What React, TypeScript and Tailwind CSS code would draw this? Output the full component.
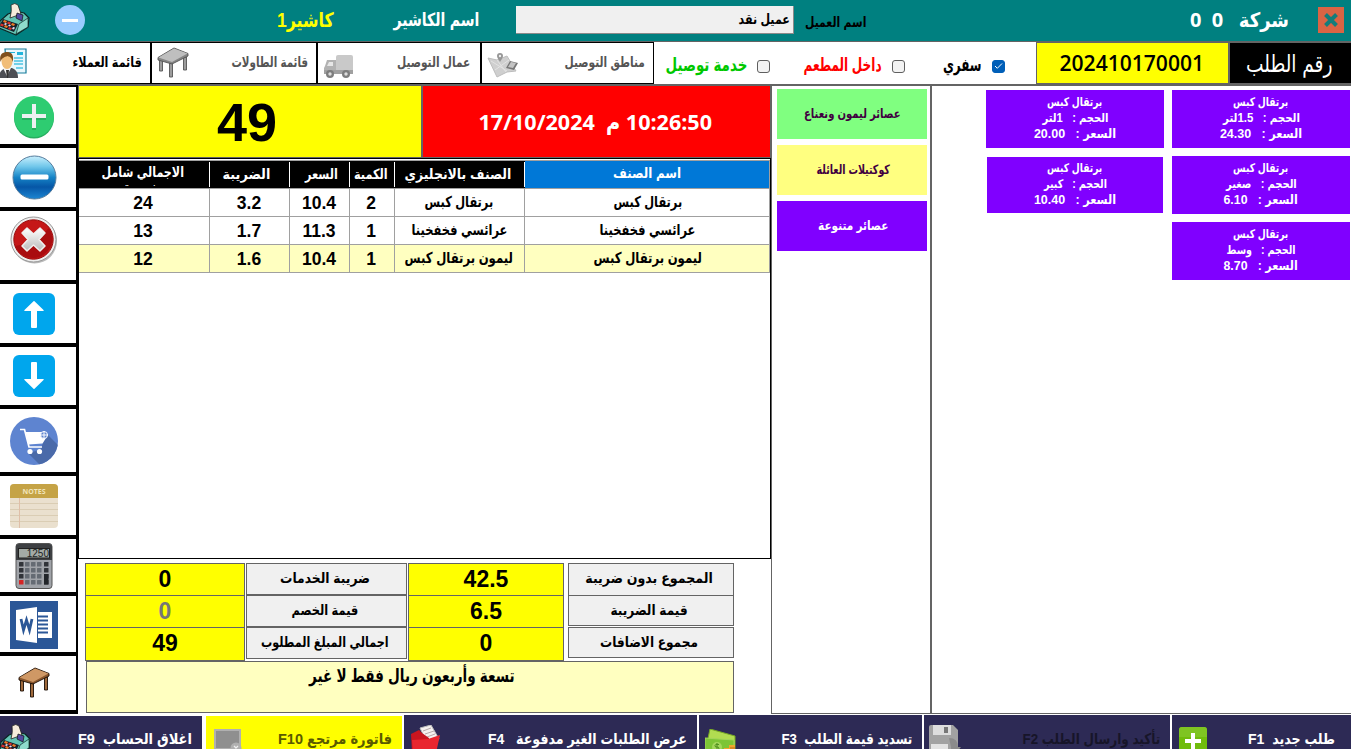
import React, { useLayoutEffect, useRef, useState } from "react";

function Fit({ w, className = "", children }: { w: number; className?: string; children: React.ReactNode }) {
  const ref = useRef<HTMLSpanElement>(null);
  const [scale, setScale] = useState(1);
  useLayoutEffect(() => {
    if (ref.current) setScale(w / ref.current.offsetWidth);
  }, [w]);
  return (
    <span dir="ltr" className={`inline-flex shrink-0 justify-center ${className}`} style={{ width: w }}>
      <span ref={ref} dir="rtl" className="inline-block shrink-0 whitespace-pre" style={{ transform: `scaleX(${scale})` }}>
        {children}
      </span>
    </span>
  );
}

function Register({ className = "" }: { className?: string }) {
  return (
    <svg className={className} width="31" height="33" viewBox="0 0 31 33" strokeLinejoin="round">
      <path d="M1 18L9 11L17 8L25 10L30 15L29 24L17 32L0 25Z" fill="#63c4b4" stroke="#0b2524" strokeWidth="1.2" />
      <path d="M17 31L20 21L29 15L29 24Z" fill="#8fdccb" stroke="#0b2524" strokeWidth=".7" />
      <path d="M12 2Q16 -1 19 2L22 11L11 15Q13 8 12 2Z" fill="#f6ecdb" stroke="#222" strokeWidth=".8" />
      <path d="M18 10L24 12L23 18L17 15Z" fill="#5349a0" stroke="#111" strokeWidth=".7" />
      <path d="M4 16L19 21L15 29L0 23Z" fill="#16202a" />
      <path d="M5 17l3 1-1 2-3-1zM13 20l3 1-1 2-3-1zM6 22l3 1-1 2-3-1z" fill="#f27a25" />
      <path d="M9 18.500l3 1-1 2-3-1zM2 20.500l3 1-1 2-3-1zM10 24l3 1-1 2-3-1z" fill="#d8322c" />
      <path d="M6 20l2 .5-1 1.500-2-.5zM10 21.500l2 .5-1 1.500-2-.5zM14 24l2 .5-1 2-2-.5z" fill="#e8d9ef" />
    </svg>
  );
}

function Customer() {
  return (
    <svg width="28" height="31" viewBox="0 0 28 31">
      <path d="M6 1H27V25H8Z" fill="#e8f7fc" stroke="#167c9b" strokeWidth="1.2" />
      <path d="M18 4h6v3h-6zM10 4h6v1h-6z" fill="#22b5dc" />
      <path d="M15 10h9M15 13h9M15 16h9M17 20h7" stroke="#49c3e2" strokeWidth="1.4" />
      <path d="M0 30 C0 24 3 21 7 20 L13 20 C17 22 19 24 19 30Z" fill="#4d4f55" />
      <path d="M4 20L8 28L12 20Z" fill="#f3f3f3" />
      <path d="M7 22h3l-1 8h-1z" fill="#333" />
      <ellipse cx="8" cy="13" rx="5.500" ry="8" fill="#f1bd78" />
      <path d="M1.500 14C0 7 3 4 8 4c6 0 7 5 5.500 10-.5-4-2-5-5-6-3 1-6 2-7 6z" fill="#80501d" />
    </svg>
  );
}

function Table({ wood = false }: { wood?: boolean }) {
  const edge = wood ? "#1b0f06" : "#555";
  return (
    <svg width="32" height="32" viewBox="0 0 32 32" strokeLinejoin="round">
      <g fill={wood ? "#a06a3c" : "#9c9c9c"} stroke={edge} strokeWidth=".9">
        <path d="M2.500 12h3v12h-3zM12.500 16h3v14h-3zM26.500 10h3v13h-3z" />
      </g>
      <path d="M1 10.500L17 1L31 6.500V9L15 17L1 13Z" fill={wood ? "#8a562c" : "#858585"} stroke={edge} strokeWidth=".9" />
      <path d="M1.500 10.500L17 1.500L30.500 6.500L15 15Z" fill={wood ? "#cf9865" : "#bfbfbf"} />
    </svg>
  );
}

function Truck() {
  return (
    <svg width="30" height="25" viewBox="0 0 30 25">
      <rect x="12" y="1" width="17" height="17" rx="2" fill="#c9c9c9" />
      <path d="M1 12L3 6H12V20H0V14Z" fill="#b2b2b2" />
      <path d="M3 12L5 8H9V12Z" fill="#e6e6e6" />
      <path d="M0 16H29V20H0Z" fill="#a0a0a0" />
      <circle cx="6" cy="20" r="4" fill="#7d7d7d" />
      <circle cx="6" cy="20" r="1.700" fill="#ddd" />
      <circle cx="22" cy="20" r="4" fill="#7d7d7d" />
      <circle cx="22" cy="20" r="1.700" fill="#ddd" />
    </svg>
  );
}

function MapIcon() {
  return (
    <svg width="32" height="26" viewBox="0 0 32 26">
      <path d="M1 6L10 8L20 4L29 19L20 20L10 25Z" fill="#cfcfcf" stroke="#bdbdbd" />
      <path d="M4 9L20 19M8 18L22 8M10 8L19 20" stroke="#e3e3e3" fill="none" />
      <path d="M10 4a3 3 0 1 1 6 0c0 2-2 4-3 6-1-2-3-4-3-6z" fill="#969696" />
      <circle cx="13" cy="4" r="1.200" fill="#eee" />
      <path d="M23 9L31 11L27 18L19 16Z" fill="#777" />
      <path d="M24 10L29 11L26 16L21 15Z" fill="#c4c4c4" />
    </svg>
  );
}

const Plus = () => (
  <svg width="40" height="43" viewBox="0 0 40 43">
    <ellipse cx="20" cy="22" rx="20" ry="20.500" fill="#27ae60" />
    <ellipse cx="20" cy="20.500" rx="20" ry="20.500" fill="#2ecc71" />
    <path d="M18 10h4v10h10v4H22v10h-4V24H8v-4h10z" fill="#27ae60" />
    <path d="M18 8h4v10h10v4H22v10h-4V22H8v-4h10z" fill="#ecf0f1" />
  </svg>
);

const Minus = () => (
  <svg width="45" height="45" viewBox="0 0 45 45">
    <defs>
      <linearGradient id="minus" x2="0" y2="1">
        <stop stopColor="#c9effd" />
        <stop offset=".25" stopColor="#6fc6ea" />
        <stop offset=".5" stopColor="#1583c6" />
        <stop offset=".72" stopColor="#0656a6" />
        <stop offset="1" stopColor="#1c86d2" />
      </linearGradient>
    </defs>
    <circle cx="22.500" cy="22.500" r="21.500" fill="url(#minus)" stroke="#547c9d" />
    <rect x="8.500" y="19.500" width="28" height="5" rx="1.500" fill="#fff" />
  </svg>
);

const Cancel = () => (
  <svg width="48" height="48" viewBox="0 0 48 48">
    <defs>
      <linearGradient id="cross" x2="0" y2="1">
        <stop stopColor="#fff" />
        <stop offset="1" stopColor="#bababa" />
      </linearGradient>
    </defs>
    <circle cx="24.500" cy="25" r="22.500" fill="#bbb" />
    <circle cx="23.500" cy="23.500" r="22.500" fill="#eee" stroke="#999" />
    <circle cx="23.500" cy="23.500" r="19.700" fill="#c51718" stroke="#991010" />
    <path d="M5 30C15 29 31 21 39 12C49 29 34 42 24 42C15 42 8 38 5 30Z" fill="#a90c0f" />
    <path d="M17 12L23.500 18L30 12L35 17L29 23.500L35 30L30 35L23.500 29L17 35L12 30L18 23.500L12 17Z" fill="url(#cross)" stroke="#f0f0f0" strokeLinejoin="round" strokeWidth="1.500" />
  </svg>
);

const Arrow = ({ down = false }: { down?: boolean }) => (
  <svg width="42" height="42" viewBox="0 0 42 42">
    <rect width="42" height="42" rx="6" fill="#00a6ed" />
    <path
      transform={down ? "rotate(180 21 21)" : undefined}
      d="M20.500 8.300Q21 7.700 21.500 8.300L30.500 17Q31.500 18 30 18H24V34Q24 35 23 35H19Q18 35 18 34V18H12Q10.500 18 11.500 17Z"
      fill="#fff"
    />
  </svg>
);

const Cart = () => (
  <svg width="48" height="48" viewBox="0 0 48 48">
    <defs>
      <clipPath id="disc">
        <circle cx="24" cy="24" r="24" />
      </clipPath>
    </defs>
    <circle cx="24" cy="24" r="24" fill="#5e84d0" />
    <path d="M37 17L50 30V50H32L18 36L30 33Z" fill="#4a6aa9" clipPath="url(#disc)" />
    <path d="M10 12.500h4.500L19 30h13" fill="none" stroke="#fff" strokeWidth="1.700" />
    <path d="M15.500 15H33V21H36L32.500 26.500L18.500 27.500Z" fill="#fff" />
    <circle cx="34" cy="18" r="3.500" fill="#5e84d0" stroke="#fff" />
    <path d="M34 14v8M30 18h8" stroke="#fff" />
    <circle cx="20" cy="34.500" r="2.600" fill="#fff" />
    <circle cx="29.500" cy="34.500" r="2.600" fill="#fff" />
  </svg>
);

const Notes = () => (
  <svg width="48" height="44" viewBox="0 0 48 44">
    <rect width="48" height="44" rx="4" fill="#eae0ce" />
    <path d="M0 14V4Q0 0 4 0H44Q48 0 48 4V14Z" fill="#c5a346" />
    <path d="M0 19.500H48M0 25.500H48M0 31.500H48M0 37.500H48" stroke="#dacdb4" />
    <path d="M9.500 14V44" stroke="#dfbfa8" />
    <text x="24" y="10" textAnchor="middle" fontFamily="Open Sans, sans-serif" fontWeight="700" fontSize="7" fill="#f1e5bb">NOTES</text>
  </svg>
);

const Calculator = () => (
  <svg width="38" height="46" viewBox="0 0 38 46">
    <rect x="1" y="0.500" width="36" height="45" rx="3" fill="#a0a3a8" stroke="#555" />
    <path d="M1 3Q1 1 4 1H34Q37 1 37 4V17H1Z" fill="#3e4043" />
    <rect x="3.500" y="5.500" width="31" height="9.500" fill="#a3aaa5" stroke="#222" />
    <text x="34" y="14" textAnchor="end" fontFamily="Liberation Sans, sans-serif" fontSize="10" fontWeight="400" fill="#202424">1250</text>
    <g>
      {[19, 25, 31, 37].map((y) => [4, 10, 16, 22, 29].map((x) => <rect key={`${x}-${y}`} x={x} y={y} width="4.500" height="4.500" rx=".5" fill={x === 4 && y === 37 ? "#d52424" : x === 29 || x === 4 ? "#303338" : "#656b73"} />))}
    </g>
    <rect x="29" y="31" width="4.500" height="10.500" fill="#222529" />
  </svg>
);

const Word = () => (
  <svg width="48" height="48" viewBox="0 0 48 48">
    <path d="M0 0H48V48H0Z" fill="#2b5797" />
    <path d="M28 11H42V37H28Z" fill="#fff" />
    <path d="M28 15.500h10M28 19.500h10M28 23.500h10M28 27.500h10M28 31.500h10" stroke="#2b5797" strokeWidth="1.800" />
    <path d="M6 9L27 6V42L6 39Z" fill="#fff" />
    <path d="M11 18L13.500 29L16.500 19L19.500 29L22 18" fill="none" stroke="#2b5797" strokeWidth="2.800" />
  </svg>
);

const FolderIcon = () => (
  <svg width="30" height="28" viewBox="0 0 30 28">
    <path d="M9 3L20 0L28 14L19 24Z" fill="#f6f1ef" stroke="#bbb" />
    <path d="M12 6L20 3M14 9L23 6M16 12L24 9" stroke="#b5a9a9" />
    <path d="M0 9L8 5L11 8L18 13V28H1Z" fill="#c9151f" />
    <path d="M1 15L17 14L29 10L25 28H2Z" fill="#e9262f" />
  </svg>
);

const Money = () => (
  <svg width="32" height="28" viewBox="0 0 32 28">
    <path d="M5 0L30 7V20L2 14Z" fill="#b1dc51" stroke="#75a824" />
    <path d="M0 9L29 11V28H0Z" fill="#7cc535" stroke="#a4d55a" />
    <circle cx="12" cy="18" r="5" fill="#a3d75b" />
    <path d="M14 15.500q-4-1-4 1t2 1.500 2 2-4 1M12 14v9" fill="none" stroke="#4d8e1d" />
    <path d="M19 19h5v-3h6v12H17v-6h2z" fill="#f0a72c" />
    <path d="M18 23h6M18 26h6M25 19h5M25 23h5" stroke="#b96f1d" />
  </svg>
);

const Save = () => (
  <svg width="32" height="28" viewBox="0 0 32 28">
    <path d="M0 2Q0 0 2 0H24L29 5V28H0Z" fill="#a2a2a2" />
    <path d="M4 0H22V10H4Z" fill="#ddd" />
    <path d="M15 2h4v6h-4z" fill="#777" />
    <path d="M2 19H19V28H2Z" fill="#e2e2e2" />
    <path d="M20 13Q29 13 29 22H32L27 28H22V22Z" fill="#8b8b8b" />
  </svg>
);

const NewOrder = () => (
  <svg width="28" height="28" viewBox="0 0 28 28">
    <rect width="28" height="32" rx="3" fill="#70bc0c" />
    <path d="M0 3Q0 0 3 0H25Q28 0 28 3V10H0Z" fill="#7fc422" />
    <path d="M12 6h4v6h6v4h-6v7h-4v-7H6v-4h6z" fill="#fff" />
  </svg>
);

const ReturnIcon = () => (
  <svg width="30" height="24" viewBox="0 0 30 24">
    <path d="M0 0H27V22H0Z" fill="#b0b0b0" />
    <path d="M2 2H25V19H2Z" fill="#8f8f8f" />
    <circle cx="22" cy="19" r="5.500" fill="#b0b0b0" />
    <path d="M20 17l4 4M24 17l-4 4" stroke="#eee" strokeWidth="1.300" />
  </svg>
);

function Check({ on = false }: { on?: boolean }) {
  return (
    <span className={`flex size-[13px] shrink-0 items-center justify-center rounded-[3px] border ${on ? "border-[#005fb8] bg-[#005fb8]" : "border-[#5f5f5f] bg-[#f3f3f3]"}`}>
      {on && (
        <svg width="9" height="8" viewBox="0 0 9 8">
          <path d="M1 4L3.300 6.300L8 1.500" fill="none" stroke="#fff" />
        </svg>
      )}
    </span>
  );
}

const cols = "grid grid-cols-[131px_80px_60px_45px_130px_245px]";
const rows = [
  { total: "24", tax: "3.2", price: "10.4", qty: "2", name: "برتقال كبس", w: 69 },
  { total: "13", tax: "1.7", price: "11.3", qty: "1", name: "عرائسي فخفخينا", w: 96 },
  { total: "12", tax: "1.6", price: "10.4", qty: "1", name: "ليمون برتقال كبس", w: 108 },
];

const heads = [
  { t: "الضريبة", w: 48, pad: "pr-[6px]" },
  { t: "السعر", w: 33, pad: "pl-[3px]" },
  { t: "الكمية", w: 34, pad: "pr-[2px]" },
  { t: "الصنف بالانجليزي", w: 107, pad: "pr-[3px]" },
];

function Product({ size, sw, price, small = false }: { size: string; sw: number; price: string; small?: boolean }) {
  return (
    <div className={`flex flex-col items-center bg-[#8000ff] text-[12px] leading-[16px] text-white ${small ? "mx-px my-px h-14 pt-[3px]" : "h-[58px] pt-[4px]"}`}>
      <Fit w={55}>برتقال كبس</Fit>
      <Fit w={sw}>{`الحجم :   ${size}`}</Fit>
      <Fit w={price.length > 4 ? 82 : 74} className="text-[12.500px]">{`السعر :   ${price}`}</Fit>
    </div>
  );
}

function SumLabel({ w, children, className }: { w: number; children: string; className: string }) {
  return (
    <div className={`flex justify-center border border-[#646464] bg-[#f0f0f0] pr-[4px] text-[14px] leading-[29px] ${className}`}>
      <Fit w={w}>{children}</Fit>
    </div>
  );
}

function SideCell({ className, children }: { className: string; children: React.ReactNode }) {
  return <div className={`flex shrink-0 justify-center border-b-4 border-black pr-[8px] ${className}`}>{children}</div>;
}

export default function App() {
  return (
    <div className="flex h-[749px] w-[1351px] flex-col overflow-hidden bg-white font-['Liberation_Sans','DejaVu_Sans_Condensed','DejaVu_Sans',sans-serif] font-bold text-black">
      <header className="flex h-[42px] shrink-0 border-b border-[#646464] bg-[#008080]">
        <Register className="mt-[3px] -ml-px shrink-0" />
        <span className="mt-[5px] ml-[25px] flex size-[30px] shrink-0 items-center justify-center rounded-full bg-[#99ccff]">
          <span className="h-[3px] w-4 bg-white" />
        </span>
        <Fit w={57} className="ml-[192px] text-[20px] leading-[41px] text-[#ffff00]">كاشير1</Fit>
        <Fit w={86} className="ml-[59px] text-[18px] leading-[40px] text-white">اسم الكاشير</Fit>
        <div className="mt-[6px] ml-[37px] flex h-7 w-[278px] shrink-0 justify-end border-r border-b border-[#8a8a8a] bg-[#f0f0f0] pr-[3px] text-[14px] leading-[26px]">
          <Fit w={51}>عميل نقد</Fit>
        </div>
        <Fit w={61} className="ml-[11px] text-[14px] leading-[45px]">اسم العميل</Fit>
        <Fit w={99} className="ml-[324px] font-['Open_Sans','DejaVu_Sans_Condensed',sans-serif] text-[20px] leading-[40px] text-white">{"شركة   0  0"}</Fit>
        <span className="mt-[7px] ml-[29px] flex size-[26px] items-center justify-center bg-[#da6444]">
          <svg width="14" height="14" viewBox="0 0 14 14">
            <path d="M1.500 1.500L12.500 12.500M12.500 1.500L1.500 12.500" stroke="#127d7b" strokeWidth="4" />
          </svg>
        </span>
      </header>

      <nav className="flex h-11 shrink-0 border-b-2 border-[#646464] text-[14px] leading-[38px]">
        <div className="flex h-[42px] w-[654px] shrink-0 border-y border-black text-[#555]">
          <div className="flex w-[152px] items-start justify-between border-r-2 border-black pr-[8px] text-black">
            <span className="-ml-px pt-[5px]"><Customer /></span>
            <Fit w={69}>قائمة العملاء</Fit>
          </div>
          <div className="flex w-[166px] items-start justify-between border-r-2 border-black pr-[8px] pl-[5px]">
            <span className="pt-[4px]"><Table /></span>
            <Fit w={77}>قائمة الطاولات</Fit>
          </div>
          <div className="flex w-[164px] items-start justify-between border-r-2 border-black pr-[10px] pl-[6px]">
            <span className="pt-[11px]"><Truck /></span>
            <Fit w={73}>عمال التوصيل</Fit>
          </div>
          <div className="flex w-[172px] items-start justify-between border-r border-black pr-[8px] pl-[5px]">
            <span className="pt-[9px]"><MapIcon /></span>
            <Fit w={80}>مناطق التوصيل</Fit>
          </div>
        </div>
        <div className="flex w-[382px] shrink-0 items-center pl-[11px] text-[18px] leading-[40px]">
          <Fit w={82} className="mt-[3px] text-[#00c800]">خدمة توصيل</Fit>
          <span className="mt-[6px] ml-[10px]"><Check /></span>
          <Fit w={78} className="mt-[3px] ml-[34px] text-[#ff0000]">داخل المطعم</Fit>
          <span className="mt-[6px] ml-[10px]"><Check /></span>
          <Fit w={39} className="mt-[3px] ml-[38px]">سفري</Fit>
          <span className="mt-[6px] ml-[10px]"><Check on /></span>
        </div>
        <div className="flex h-[42px] w-[192px] shrink-0 items-center justify-center border border-r-0 border-[#646464] bg-[#ffff00] pr-[2px] font-['Open_Sans',sans-serif] text-[21.500px] font-semibold">
          <Fit w={145}>202410170001</Fit>
        </div>
        <div className="flex h-[42px] flex-1 justify-end border-y border-l-2 border-[#646464] bg-black pr-[19px] text-[24px] leading-[42px] font-normal text-white">
          <Fit w={86}>رقم الطلب</Fit>
        </div>
      </nav>

      <main className="flex h-[628px] shrink-0">
        <aside className="-mt-px flex h-[629px] w-[78px] shrink-0 flex-col border-t-2 border-r-2 border-black">
          <SideCell className="h-[61px] pt-[9px]"><Plus /></SideCell>
          <SideCell className="h-[63px] pt-[7px]"><Minus /></SideCell>
          <SideCell className="h-[73px] pt-[5px]"><Cancel /></SideCell>
          <SideCell className="h-[63px] pt-[9px]"><Arrow /></SideCell>
          <SideCell className="h-[62px] pt-[8px]"><Arrow down /></SideCell>
          <SideCell className="h-[67px] pt-[8px]"><Cart /></SideCell>
          <SideCell className="h-[63px] pt-[8px]"><Notes /></SideCell>
          <SideCell className="h-[57px] pt-[4px]"><Calculator /></SideCell>
          <SideCell className="h-[60px] pt-[5px]"><Word /></SideCell>
          <SideCell className="h-[58px] border-b-2 pt-[11px]"><Table wood /></SideCell>
        </aside>

        <section className="flex w-[693px] shrink-0 flex-col">
          <div className="flex h-[72px] border-b border-l border-[#646464]">
            <div className="flex w-[342px] items-center justify-center bg-[#ffff00] pr-[6px] text-[54px] leading-none">
              <span>49</span>
            </div>
            <div className="flex flex-1 items-center justify-center border-x-2 border-r border-[#646464] bg-[#ff0000] pr-[3px] font-['Open_Sans','DejaVu_Sans_Condensed',sans-serif] text-[22px] leading-[68px] text-white">
              <Fit w={234} className="-mt-[2px]">{"10:26:50 م  17/10/2024"}</Fit>
            </div>
          </div>
          <div className="flex h-[401px] flex-col border border-black">
            <div className="mt-px h-px w-[691px] bg-[#a0a0a0]" />
            <div className={`${cols} h-[28px] w-[691px] border-b border-[#a0a0a0] bg-black text-[14px] leading-[24px] text-white`}>
              <div className="my-px flex h-[25px] justify-center overflow-hidden border-r border-white pr-[2px] leading-[20px]">
                <span className="flex flex-col items-center">
                  <Fit w={82}>الاجمالي شامل</Fit>
                  <Fit w={40} className="-mt-[5px]">ضريبة</Fit>
                </span>
              </div>
              {heads.map((h) => (
                <div key={h.t} className={`my-px flex justify-center border-r border-white ${h.pad}`}>
                  <Fit w={h.w}>{h.t}</Fit>
                </div>
              ))}
              <div className="flex justify-center border-r border-[#a0a0a0] bg-[#0078d7]">
                <Fit w={68}>اسم الصنف</Fit>
              </div>
            </div>
            {rows.map((r, i) => (
              <div key={r.name} className={`${cols} h-[28px] w-[691px] border-b border-[#a0a0a0] text-[17.500px] leading-[28px] ${i === 2 ? "bg-[#ffffc0]" : "bg-white"}`}>
                {[r.total, r.tax, r.price, r.qty].map((v, j) => (
                  <div key={j} className={`border-r border-[#a0a0a0] text-center ${j === 0 || j === 3 ? "pr-[2px]" : "pr-[1px]"}`}>{v}</div>
                ))}
                <div className="flex justify-center border-r border-[#a0a0a0] pr-px text-[15px] leading-[26px]">
                  <Fit w={r.w}>{r.name}</Fit>
                </div>
                <div className="flex justify-center border-r border-[#a0a0a0] pl-px text-[15px] leading-[26px]">
                  <Fit w={r.w}>{r.name}</Fit>
                </div>
              </div>
            ))}
          </div>
          <div className="mt-[4px] ml-[7px] flex h-[98px] items-start">
            <div className="grid h-[98px] w-[160px] grid-rows-[32px_32px_34px] border-x border-[#646464] bg-[#ffff00] text-center text-[23px] leading-[31px]">
              <div className="border-t border-[#646464]">0</div>
              <div className="border-t border-[#646464] text-[#777]">0</div>
              <div className="border-y border-[#646464]">49</div>
            </div>
            <div className="ml-px w-[161px]">
              <SumLabel w={90} className="h-[32px]">ضريبة الخدمات</SumLabel>
              <SumLabel w={67} className="h-[32px]">قيمة الخصم</SumLabel>
              <SumLabel w={128} className="h-[32px]">اجمالي المبلغ المطلوب</SumLabel>
            </div>
            <div className="ml-px grid h-[98px] w-[156px] grid-rows-[32px_32px_34px] border-x border-[#646464] bg-[#ffff00] text-center text-[23px] leading-[31px]">
              <div className="border-t border-[#646464]">42.5</div>
              <div className="border-t border-[#646464]">6.5</div>
              <div className="border-y border-[#646464]">0</div>
            </div>
            <div className="ml-[4px] w-[166px]">
              <SumLabel w={127} className="h-[33px]">المجموع بدون ضريبة</SumLabel>
              <SumLabel w={77} className="-mt-px h-[31px]">قيمة الضريبة</SumLabel>
              <SumLabel w={98} className="mt-px h-[31px]">مجموع الاضافات</SumLabel>
            </div>
          </div>
          <div className="ml-[8px] flex h-[52px] w-[648px] justify-center border border-[#646464] bg-[#ffffc0] text-[18px] leading-[29px]">
            <Fit w={206} className="ml-[3px]">تسعة وأربعون ريال فقط لا غير</Fit>
          </div>
        </section>

        <section className="flex w-[161px] shrink-0 flex-col gap-[6px] border-r-2 border-b border-l border-[#646464] pt-[3px] pl-[5px] text-[13px] leading-[49px]">
          <div className="flex h-[50px] w-[150px] justify-center bg-[#80ff80] text-[#400040]"><Fit w={97}>عصائر ليمون ونعناع</Fit></div>
          <div className="flex h-[50px] w-[150px] justify-center bg-[#ffff80] pl-[2px] text-[#400040]"><Fit w={73}>كوكتيلات العائلة</Fit></div>
          <div className="flex h-[50px] w-[150px] justify-center bg-[#8000ff] pl-[2px] text-white"><Fit w={70}>عصائر متنوعة</Fit></div>
        </section>

        <section className="flex-1 border-b border-[#646464] pt-[4px] pl-[54px]">
          <div className="grid grid-cols-[178px_178px] gap-x-[8px] gap-y-[8px]">
            <Product size="1لتر" sw={66} price="20.00" />
            <Product size="1.5لتر" sw={77} price="24.30" />
            <Product size="كبير" sw={63} price="10.40" small />
            <Product size="صغير" sw={71} price="6.10" />
            <div />
            <Product size="وسط" sw={69} price="8.70" />
          </div>
        </section>
      </main>

      <footer className="flex h-[35px] shrink-0 items-start pt-px text-[15px] leading-[48px] text-white">
        <div className="mt-px flex h-[33px] w-[202px] shrink-0 items-start justify-between overflow-hidden bg-[#2d2a55] pr-[10px] leading-[46px]">
          <Register className="mt-[8px]" />
          <Fit w={114}>{"اغلاق الحساب  F9"}</Fit>
        </div>
        <div className="mt-px ml-[4px] flex h-[33px] w-[196px] shrink-0 items-start justify-between overflow-hidden bg-[#ffff00] pr-[10px] pl-[8px] leading-[46px] text-[#5a5a00]">
          <span className="mt-[13px]"><ReturnIcon /></span>
          <Fit w={114}>فاتورة مرتجع F10</Fit>
        </div>
        <div className="ml-[2px] flex h-[34px] w-[293px] shrink-0 items-start justify-between overflow-hidden bg-[#2d2a55] pr-[10px] pl-[7px]">
          <span className="mt-[10px]"><FolderIcon /></span>
          <Fit w={199}>{"عرض الطلبات الغير مدفوعة   F4"}</Fit>
        </div>
        <div className="ml-[2px] flex h-[34px] w-[223px] shrink-0 items-start justify-between overflow-hidden bg-[#2d2a55] pr-[10px] pl-[6px]">
          <span className="mt-[14px]"><Money /></span>
          <Fit w={131}>{"تسديد قيمة الطلب  F3"}</Fit>
        </div>
        <div className="ml-[2px] flex h-[34px] w-[246px] shrink-0 items-start justify-between overflow-hidden bg-[#2d2a55] pr-[10px] pl-[5px] text-[#171529]">
          <span className="mt-[10px]"><Save /></span>
          <Fit w={138}>تأكيد وارسال الطلب F2</Fit>
        </div>
        <div className="ml-[2px] flex h-[34px] flex-1 items-start justify-between overflow-hidden bg-[#2d2a55] pr-[16px] pl-[7px]">
          <span className="mt-[12px]"><NewOrder /></span>
          <Fit w={87}>{"طلب جديد  F1"}</Fit>
        </div>
      </footer>
    </div>
  );
}
